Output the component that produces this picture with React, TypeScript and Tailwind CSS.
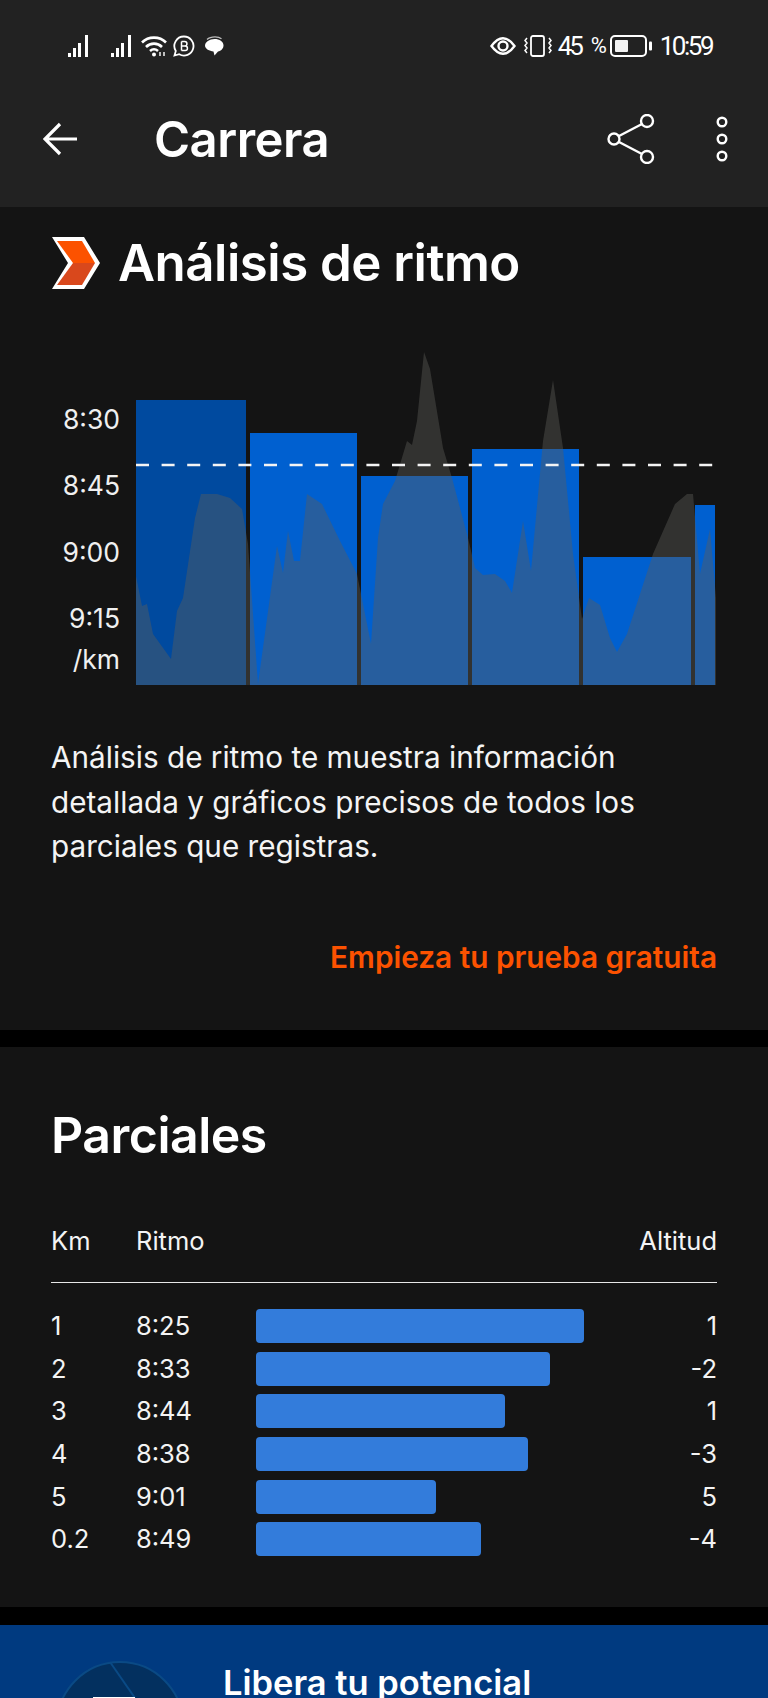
import React from 'react';

const bars = [
  { x: 136, w: 110, top: 399, fill: '#004a9f' },
  { x: 250, w: 107, top: 432, fill: '#0060d0' },
  { x: 361, w: 107, top: 475, fill: '#0060d0' },
  { x: 472, w: 107, top: 448, fill: '#0060d0' },
  { x: 583, w: 108, top: 556, fill: '#0060d0' },
  { x: 695, w: 20, top: 504, fill: '#0060d0' },
];

const elevation =
  '136,684 136,575 142,605 147,603 153,633 171,658 177,610 183,597 195,517 201,493 217,493 230,497 242,508 248,543 258,683 277,545 283,572 288,530 294,560 300,560 307,493 322,503 340,540 357,573 371,643 378,537 383,503 395,480 407,440 412,444 417,420 424,351 430,368 443,447 452,477 468,537 475,567 483,574 495,573 505,580 512,592 523,520 531,570 543,440 553,379 563,447 573,553 582,618 589,597 600,604 610,637 617,651 627,633 640,593 653,553 675,503 687,493 693,493 700,573 710,528 716,597 716,684';

const splits = [
  { km: '1', pace: '8:25', width: 328, alt: '1' },
  { km: '2', pace: '8:33', width: 294, alt: '-2' },
  { km: '3', pace: '8:44', width: 249, alt: '1' },
  { km: '4', pace: '8:38', width: 272, alt: '-3' },
  { km: '5', pace: '9:01', width: 180, alt: '5' },
  { km: '0.2', pace: '8:49', width: 225, alt: '-4' },
];

const Signal = () => (
  <svg width="22" height="22" viewBox="0 0 22 22" fill="white">
    <rect x="0" y="18" width="3" height="4" />
    <rect x="5" y="13" width="3" height="9" />
    <rect x="10" y="8" width="3" height="14" />
    <rect x="17" y="0" width="3" height="22" />
  </svg>
);

const StatusBar = () => (
  <div className="flex justify-between pl-[68px] pr-[56px] pt-[35px] h-[80px] items-start">
    <div className="flex items-center">
      <Signal />
      <div className="ml-[21px]"><Signal /></div>
      <svg className="ml-[8px]" width="26" height="22" viewBox="0 0 26 22" fill="none" stroke="white" strokeWidth="2.6">
        <path d="M1 7.5C7.5 1 18.5 1 25 7.5" />
        <path d="M5 12C9.5 7.5 16.5 7.5 21 12" />
        <path d="M9 16C11.5 13.8 14.5 13.8 17 16" />
        <circle cx="13" cy="19.5" r="2" fill="white" stroke="none" />
        <path d="M19 17v4M23 17v4" strokeWidth="1.4" />
      </svg>
      <svg className="ml-[6px]" width="22" height="22" viewBox="0 0 22 22" fill="none" stroke="white" strokeWidth="1.8">
        <path d="M11 1.5a9.5 9.5 0 1 1-4.8 17.7L1.5 20.5l1.3-4.5A9.5 9.5 0 0 1 11 1.5Z" />
        <path d="M8.500 6.500v9M8.500 6.500h3.200a2.200 2.200 0 0 1 0 4.500H8.500M8.500 11h3.700a2.250 2.250 0 0 1 0 4.500H8.500" strokeWidth="1.500" />
      </svg>
      <svg className="ml-[10px]" width="19" height="20" viewBox="0 0 19 20" fill="white">
        <path d="M9.500 3c5 0 9 2.500 9 6.500 0 3-2.500 5.500-5.500 6l-3.500 4-1-4c-4-.5-8.500-2.500-8.500-6S4.500 3 9.500 3Z" />
        <path d="M2 3.500C4 1.500 7 .8 10 .8s5 .7 6.500 2" fill="none" stroke="white" strokeWidth="1.200" opacity=".7" />
      </svg>
    </div>
    <div className="flex items-center text-white font-['Roboto',sans-serif] text-[26px] leading-[22px]">
      <svg width="26" height="18" viewBox="0 0 26 18" fill="none" stroke="white" strokeWidth="2.400">
        <path d="M1.500 9C6 2.800 9.500 1.200 13 1.200S20 2.800 24.500 9C20 15.200 16.500 16.800 13 16.800S6 15.200 1.500 9Z" />
        <circle cx="13" cy="9" r="4.500" />
      </svg>
      <svg className="ml-[8px]" width="28" height="22" viewBox="0 0 28 22" fill="none" stroke="white" strokeWidth="1.800">
        <rect x="7" y="1" width="13" height="20" rx="2" />
        <path d="M3 3l-2 2.500 2 2.500-2 2.500 2 2.500-2 2.500 2 2.500M25 3l2 2.500-2 2.500 2 2.500-2 2.500 2 2.500-2 2.500" strokeWidth="1.500" />
      </svg>
      <span className="ml-[6px] w-[24px] tracking-[-3px]">45</span>
      <span className="ml-[9px] w-[13px] text-[22px] tracking-[-2px]">%</span>
      <svg className="ml-[6px]" width="42" height="22" viewBox="0 0 42 22" fill="none">
        <rect x="1" y="1" width="35" height="20" rx="4" stroke="white" strokeWidth="2" />
        <rect x="5" y="5" width="13" height="12" rx="1" fill="#f2f2f2" />
        <rect x="39" y="6.500" width="3" height="9" rx="1" fill="white" />
      </svg>
      <span className="ml-[8px] tracking-[-2.500px]">10:59</span>
    </div>
  </div>
);

const Toolbar = () => (
  <div className="flex items-center h-[127px] pl-[43px] pr-[40px] pb-[9px]">
    <svg width="34" height="34" viewBox="0 0 34 34" fill="none" stroke="white" strokeWidth="3.200">
      <path d="M17 2 2 17l15 15M2 17h32" />
    </svg>
    <h1 className="ml-[77px] text-white font-semibold text-[49px] leading-none tracking-[-0.5px]">Carrera</h1>
    <svg className="ml-auto" width="48" height="50" viewBox="0 0 48 50" fill="none" stroke="white" strokeWidth="2.400">
      <circle cx="7" cy="25" r="5.500" />
      <circle cx="40" cy="7" r="6" />
      <circle cx="40" cy="43" r="6" />
      <path d="M12 22 35 10M12 28l23 12" />
    </svg>
    <svg className="ml-[61px] -mt-[1px]" width="12" height="46" viewBox="0 0 12 46" fill="none" stroke="white" strokeWidth="2.400">
      <circle cx="6" cy="6" r="4.300" />
      <circle cx="6" cy="23" r="4.300" />
      <circle cx="6" cy="40" r="4.300" />
    </svg>
  </div>
);

const PaceChart = () => (
  <div className="flex mt-[49px]">
    <div className="w-[69px] flex flex-col items-end text-[26.500px] leading-[32px] text-[#f0f0f0] pt-[62px]">
      <span>8:30</span>
      <span className="mt-[34px]">8:45</span>
      <span className="mt-[35px]">9:00</span>
      <span className="mt-[34px]">9:15</span>
      <span className="mt-[9px]">/km</span>
    </div>
    <svg className="ml-[16px]" width="580" height="350" viewBox="136 340 580 350">
      {bars.map((b) => (
        <rect key={b.x} x={b.x} y={b.top} width={b.w} height={684 - b.top} fill={b.fill} />
      ))}
      <polygon points={elevation} fill="#5e5c58" fillOpacity="0.42" />
      <line x1="136" y1="464" x2="714" y2="464" stroke="#f4f4f4" strokeWidth="2.600" strokeDasharray="13 12.600" />
    </svg>
  </div>
);

export default function App() {
  return (
    <div className="h-[1698px] overflow-hidden bg-black font-['Inter',sans-serif]">
      <div className="bg-[#222222] h-[207px]">
        <StatusBar />
        <Toolbar />
      </div>

      {/* Analisis de ritmo */}
      <section className="bg-[#141414] h-[823px] px-[51px] pt-[27px]">
        <div className="flex items-center">
          <svg width="50" height="54" viewBox="52 235 50 54">
            <polygon points="53,236 85,236 101,262 85,288 53,288 69,262" fill="white" />
            <polygon points="58,240 83,240 96,262 74,262" fill="#fc5200" />
            <polygon points="74,262 96,262 83,284 58,284" fill="#d9481c" />
          </svg>
          <h2 className="ml-[17px] text-white font-semibold text-[51px] leading-[58px] tracking-[-0.5px]">Análisis de ritmo</h2>
        </div>

        <PaceChart />

        <p className="mt-[44px] text-[29.700px] leading-[44.500px] text-[#f4f4f4]">
          Análisis de ritmo te muestra información detallada y gráficos precisos de todos los parciales que registras.
        </p>

        <div className="mt-[68px] text-right text-[#fc5200] font-semibold text-[29.750px] leading-[40px]">
          Empieza tu prueba gratuita
        </div>
      </section>

      <div className="h-[17px]" />

      {/* Parciales */}
      <section className="bg-[#141414] h-[560px] px-[51px] pt-[58px]">
        <h2 className="text-white font-semibold text-[50px] leading-[60px] tracking-[-0.5px]">Parciales</h2>
        <div className="mt-[56px] flex items-center h-[62px] text-[25.500px] text-[#f4f4f4] border-b border-[#e8e8e8] pb-[20px]">
          <span className="w-[85px]">Km</span>
          <span>Ritmo</span>
          <span className="ml-auto">Altitud</span>
        </div>
        <div className="mt-[26px] flex flex-col gap-[8.700px]">
          {splits.map((s) => (
            <div key={s.km} className="flex items-center h-[34px] text-[25.500px] text-[#f4f4f4]">
              <span className="w-[85px]">{s.km}</span>
              <span className="w-[120px]">{s.pace}</span>
              <div className="h-[34px] rounded-[4px] bg-[#337cdb]" style={{ width: s.width }} />
              <span className="ml-auto">{s.alt}</span>
            </div>
          ))}
        </div>
      </section>

      <div className="h-[18px]" />

      {/* Upsell banner */}
      <section className="bg-[#003a80] h-[120px] flex items-start pl-[55px]">
        <svg className="mt-[35px] shrink-0" width="130" height="130" viewBox="0 0 130 130">
          <circle cx="65" cy="65" r="63" fill="#03305f" stroke="#0a4a85" strokeWidth="2" />
          <path d="M55 2 80 38" stroke="#0a4a85" strokeWidth="2" />
          <rect x="38" y="37" width="42" height="60" fill="white" />
        </svg>
        <h3 className="ml-[38px] mt-[36px] text-white font-semibold text-[34.500px] leading-[44px] whitespace-nowrap">Libera tu potencial</h3>
      </section>
    </div>
  );
}
